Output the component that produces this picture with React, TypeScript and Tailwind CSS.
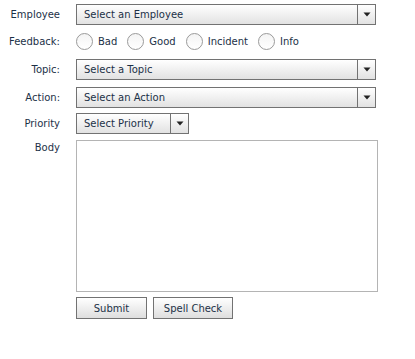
import React from "react";

const font = { fontFamily: '"DejaVu Sans", Verdana, sans-serif' };

function Arrow() {
  return (
    <svg width="8" height="5" viewBox="0 0 8 5">
      <path d="M0.5 0.5 L7.5 0.5 L4 4.5 Z" fill="#222" />
    </svg>
  );
}

function Select({ text, width }: { text: string; width: string }) {
  return (
    <div
      className={`${width} h-[21px] flex border border-[#727272] bg-gradient-to-b from-white to-[#e2e2e2]`}
    >
      <div className="flex-1 flex items-center pl-[7px] text-[#1c3147]">{text}</div>
      <div className="w-[18px] flex items-center justify-center border-l border-[#727272]">
        <Arrow />
      </div>
    </div>
  );
}

function Radio({ label }: { label: string }) {
  return (
    <div className="flex items-center">
      <span className="w-[17px] h-[17px] rounded-full border border-[#9a9a9a] bg-gradient-to-b from-[#f4f4f4] to-white" />
      <span className="ml-[5px] text-[#1c3147]">{label}</span>
    </div>
  );
}

function Label({ children, top }: { children: React.ReactNode; top?: boolean }) {
  return (
    <div className={`w-[60px] shrink-0 text-right text-[#1c3147] ${top ? "self-start" : ""}`}>
      {children}
    </div>
  );
}

function Btn({ children, width }: { children: React.ReactNode; width: string }) {
  return (
    <button
      className={`${width} h-[22px] shrink-0 border border-[#727272] bg-gradient-to-b from-white to-[#dedede] text-[#1c3147] flex items-center justify-center`}
    >
      {children}
    </button>
  );
}

export default function App() {
  return (
    <div className="w-[415px] h-[359px] bg-white pt-[4px] text-[10px]" style={font}>
      <div className="flex items-center gap-[16px]">
        <Label>Employee</Label>
        <Select text="Select an Employee" width="w-[300px]" />
      </div>
      <div className="flex items-center gap-[16px] mt-[8px] h-[17px]">
        <Label>Feedback:</Label>
        <div className="flex items-center gap-[10px]">
          <Radio label="Bad" />
          <Radio label="Good" />
          <Radio label="Incident" />
          <Radio label="Info" />
        </div>
      </div>
      <div className="flex items-center gap-[16px] mt-[9px]">
        <Label>Topic:</Label>
        <Select text="Select a Topic" width="w-[300px]" />
      </div>
      <div className="flex items-center gap-[16px] mt-[7px]">
        <Label>Action:</Label>
        <Select text="Select an Action" width="w-[300px]" />
      </div>
      <div className="flex items-center gap-[16px] mt-[5px]">
        <Label>Priority</Label>
        <Select text="Select Priority" width="w-[113px]" />
      </div>
      <div className="flex gap-[16px] mt-[6px]">
        <Label top>Body</Label>
        <textarea className="w-[302px] h-[152px] border border-[#b4b4b4] bg-white resize-none outline-none" />
      </div>
      <div className="flex gap-[6px] mt-[5px] pl-[76px]">
        <Btn width="w-[71px]">Submit</Btn>
        <Btn width="w-[80px]">Spell Check</Btn>
      </div>
    </div>
  );
}
